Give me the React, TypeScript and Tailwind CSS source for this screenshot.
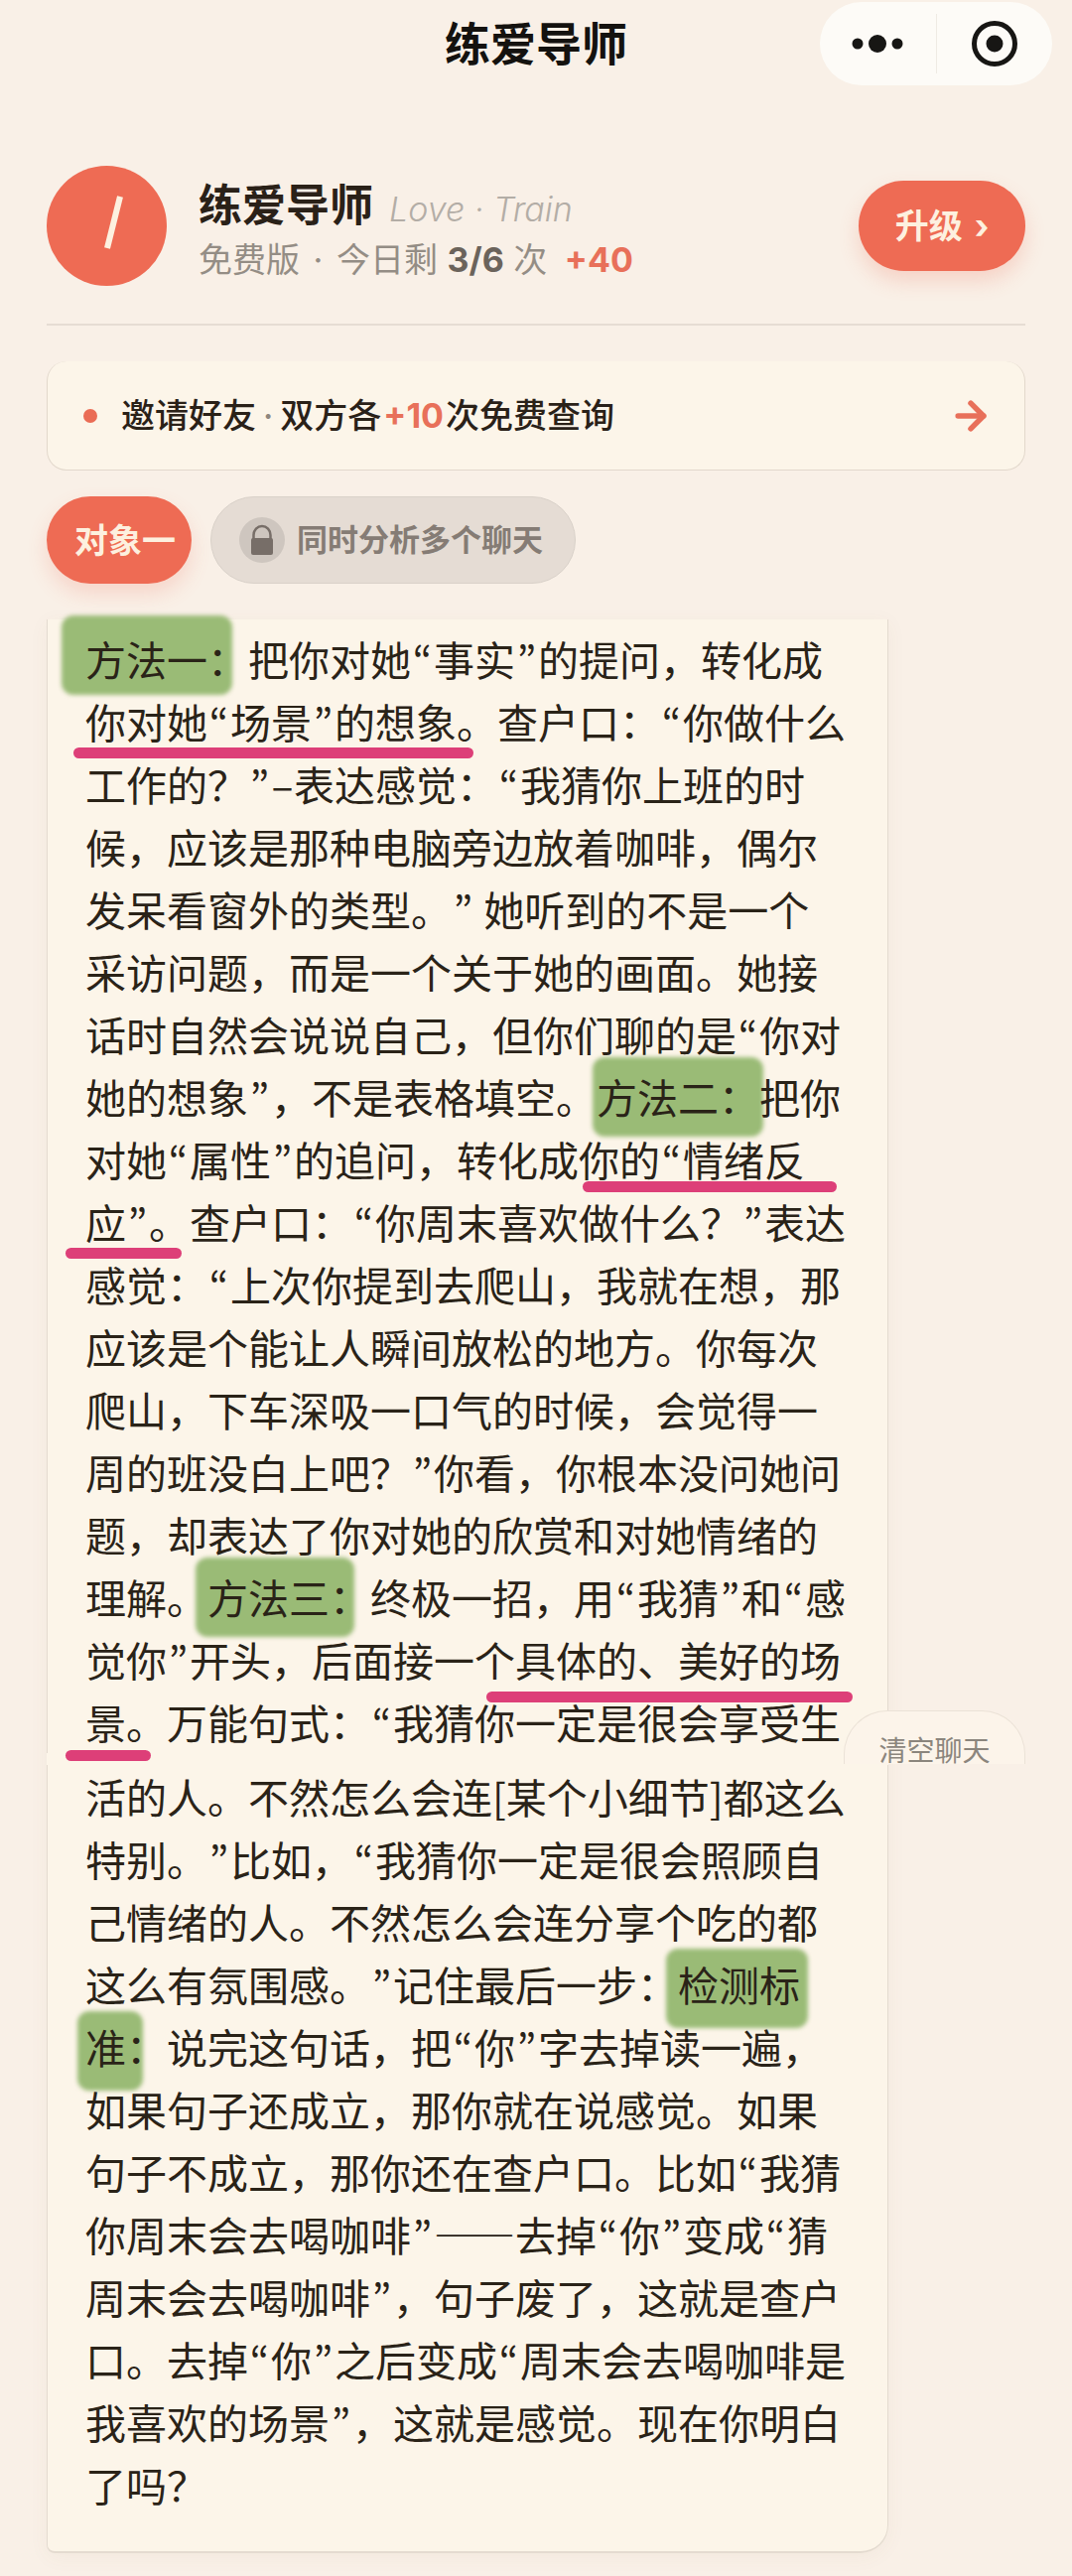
import React from 'react';
import { ArrowRight } from 'lucide-react';

interface Segment {
  text: string;
  // class names of the highlighter patch / pen stroke drawn on this piece of text
  highlight?: string;
  underline?: string;
}

type Line = Segment[];

const firstPart: Line[] = [
  [{ text: '方法一：', highlight: '-top-3 -left-6 right-4' }, { text: '把你对她“事实”的提问，转化成' }],
  [{ text: '你对她“场景”的想象。', underline: 'top-[58px] -left-3 right-6' }, { text: '查户口：“你做什么' }],
  [{ text: '工作的？”–表达感觉：“我猜你上班的时' }],
  [{ text: '候，应该是那种电脑旁边放着咖啡，偶尔' }],
  [{ text: '发呆看窗外的类型。” 她听到的不是一个' }],
  [{ text: '采访问题，而是一个关于她的画面。她接' }],
  [{ text: '话时自然会说说自己，但你们聊的是“你对' }],
  [{ text: '她的想象”，不是表格填空。' }, { text: '方法二：', highlight: '-top-2 -left-1 -right-1' }, { text: '把你' }],
  [{ text: '对她“属性”的追问，转化成' }, { text: '你的“情绪反', underline: 'top-[54px] left-1 -right-8' }],
  [{ text: '应”。', underline: 'top-[58px] -left-5 right-2' }, { text: '查户口：“你周末喜欢做什么？”表达' }],
  [{ text: '感觉：“上次你提到去爬山，我就在想，那' }],
  [{ text: '应该是个能让人瞬间放松的地方。你每次' }],
  [{ text: '爬山，下车深吸一口气的时候，会觉得一' }],
  [{ text: '周的班没白上吧？”你看，你根本没问她问' }],
  [{ text: '题，却表达了你对她的欣赏和对她情绪的' }],
  [{ text: '理解。' }, { text: '方法三：', highlight: '-top-2 -left-3 right-4' }, { text: '终极一招，用“我猜”和“感' }],
  [{ text: '觉你”开头，后面接一' }, { text: '个具体的、美好的场', underline: 'top-16 left-3 -right-3' }],
  [{ text: '景。', underline: 'top-[60px] -left-5 right-4' }, { text: '万能句式：“我猜你一定是很会享受生' }],
];

const secondPart: Line[] = [
  [{ text: '活的人。不然怎么会连[某个小细节]都这么' }],
  [{ text: '特别。”比如，“我猜你一定是很会照顾自' }],
  [{ text: '己情绪的人。不然怎么会连分享个吃的都' }],
  [{ text: '这么有氛围感。”记住最后一步：' }, { text: '检测标', highlight: '-top-1 -left-3 -right-2' }],
  [{ text: '准：', highlight: '-top-1 -left-2 right-6' }, { text: '说完这句话，把“你”字去掉读一遍，' }],
  [{ text: '如果句子还成立，那你就在说感觉。如果' }],
  [{ text: '句子不成立，那你还在查户口。比如“我猜' }],
  [{ text: '你周末会去喝咖啡”——去掉“你”变成“猜' }],
  [{ text: '周末会去喝咖啡”，句子废了，这就是查户' }],
  [{ text: '口。去掉“你”之后变成“周末会去喝咖啡是' }],
  [{ text: '我喜欢的场景”，这就是感觉。现在你明白' }],
  [{ text: '了吗？' }],
];

// Curly quotes and the short dash take a half-width cell instead of a full CJK one
const Typeset: React.FC<{ text: string }> = ({ text }) => (
  <>
    {text.split(/([“”–])/).map((part, i) =>
      /^[“”–]$/.test(part) ? (
        <span key={i} className="inline-block w-[23px] text-center leading-none font-['Noto_Sans_CJK_KR','Noto_Sans_CJK_SC',sans-serif]" lang="ko">
          {part}
        </span>
      ) : (
        <React.Fragment key={i}>{part}</React.Fragment>
      )
    )}
  </>
);

const Paragraph: React.FC<{ lines: Line[] }> = ({ lines }) => (
  <p className="text-[41px] leading-[63px] whitespace-nowrap text-[#2a2318]">
    {lines.map((line, i) => (
      <span key={i} className="block h-[63px]">
        {line.map((seg, j) =>
          seg.highlight || seg.underline ? (
            <span key={j} className="relative inline-block">
              {seg.highlight && (
                <span className={`absolute -z-10 h-20 rounded-xl bg-[#9abb76] blur-[2px] ${seg.highlight}`} />
              )}
              <Typeset text={seg.text} />
              {seg.underline && (
                <span className={`absolute h-[11px] rounded-full bg-[#dd3f78] ${seg.underline}`} />
              )}
            </span>
          ) : (
            <Typeset key={j} text={seg.text} />
          )
        )}
      </span>
    ))}
  </p>
);

const TopBar: React.FC = () => (
  <header className="grid h-[88px] grid-cols-[1fr_auto_1fr] items-center">
    <h1 className="col-start-2 text-[46px] leading-[64px] font-bold text-[#14120f]">练爱导师</h1>
    <div className="mr-5 flex h-[84px] w-[234px] items-center justify-self-end rounded-full bg-[#fdfbf7]">
      <button type="button" aria-label="更多" className="flex flex-1 justify-center">
        <svg width="56" height="24" viewBox="0 0 56 24" fill="#171614">
          <circle cx="8" cy="12" r="5.5" />
          <circle cx="28" cy="12" r="9" />
          <circle cx="48" cy="12" r="5.5" />
        </svg>
      </button>
      <span className="h-[60px] w-px bg-[#efebe4]" />
      <button type="button" aria-label="关闭" className="flex flex-1 justify-center">
        <svg width="48" height="48" viewBox="0 0 48 48">
          <circle cx="24" cy="24" r="20.5" fill="none" stroke="#171614" strokeWidth="5" />
          <circle cx="24" cy="24" r="8.5" fill="#171614" />
        </svg>
      </button>
    </div>
  </header>
);

const Profile: React.FC = () => (
  <section className="flex items-center border-b-2 border-[#e6dcd3] pb-[38px]">
    <svg className="shrink-0" width="121" height="121" viewBox="0 0 121 121">
      <circle cx="60.5" cy="60.5" r="60.5" fill="#ee6b54" />
      <path d="M74 31 L61 83" stroke="#fdf1e0" strokeWidth="6" />
    </svg>
    <div className="ml-8 flex-1 pt-2">
      <div className="flex items-baseline gap-4">
        <h2 className="text-[44px] leading-[56px] font-bold text-[#2a2118]">练爱导师</h2>
        <span className="text-[34px] leading-[56px] font-light text-[#b3ada6] italic">Love · Train</span>
      </div>
      <p className="text-[34px] leading-[46px] text-[#948d85]">
        免费版<span className="mx-1"> · </span>今日剩 <b className="font-bold text-[#6b635b]">3/6</b> 次{' '}
        <b className="ml-2 font-bold text-[#e8705a]">+40</b>
      </p>
    </div>
    <button
      type="button"
      className="flex h-[91px] w-[168px] items-center justify-center gap-3 rounded-full bg-[#ee6b54] text-[34px] font-bold text-[#fdf0df] shadow-[0_10px_20px_rgba(238,107,84,0.22)]"
    >
      升级 <span>›</span>
    </button>
  </section>
);

const InviteBanner: React.FC = () => (
  <a
    href="#invite"
    className="mt-9 flex h-[110px] items-center rounded-[20px] border border-t-0 border-[#e2d8cc] bg-[#fcf5e9] pr-8 pl-9 text-[34px] font-medium text-[#2a2118]"
  >
    <span className="mr-6 size-[14px] rounded-full bg-[#ea6c55]" />
    <span className="flex-1">
      邀请好友<span className="mx-[7px] text-[#8f877e]">·</span>双方各
      <b className="mx-[2px] font-bold text-[#e8705a]">+10</b>次免费查询
    </span>
    <ArrowRight className="text-[#e8705a]" size={44} strokeWidth={3} />
  </a>
);

const ChatTabs: React.FC = () => (
  <nav className="mt-[26px] flex gap-[19px]">
    <button
      type="button"
      className="h-[88px] rounded-full bg-[#ee6b54] pr-4 pl-7 text-[34px] font-bold text-[#fdf0df] shadow-[0_10px_20px_rgba(238,107,84,0.2)]"
    >
      对象一
    </button>
    <button
      type="button"
      className="flex h-[88px] items-center gap-3 rounded-full border border-[#d9d1c9] bg-[#e5dcd4] pr-8 pl-7 text-[31px] font-bold text-[#857c75]"
    >
      <svg width="46" height="46" viewBox="0 0 46 46">
        <circle cx="23" cy="23" r="23" fill="#cec6bf" />
        <path d="M14.5 22 V18 a8.5 9 0 0 1 17 0 V22" fill="none" stroke="#776e68" strokeWidth="2.5" />
        <rect x="12" y="21" width="22" height="17" rx="2" fill="#776e68" />
      </svg>
      同时分析多个聊天
    </button>
  </nav>
);

export default function App() {
  return (
    <div className="min-h-screen bg-[#f9f0e7] pb-6 font-['Inter','Noto_Sans_CJK_SC',sans-serif] [text-spacing-trim:space-all]" lang="zh-CN">
      <TopBar />
      <main className="px-[47px] pt-[79px]">
        <Profile />
        <InviteBanner />
        <ChatTabs />

        <div className="relative mt-9 font-['Noto_Sans_CJK_SC',sans-serif]">
          <article className="isolate w-[86%] rounded-br-[28px] rounded-bl-lg bg-[#fcf5e9] shadow-[0_4px_20px_rgba(120,90,60,0.05)]">
            <div className="border-x border-[#e4dbd0] pt-2 pl-[38px]">
              <Paragraph lines={firstPart} />
            </div>
            <div className="mt-3 rounded-br-[28px] rounded-bl-lg border-x border-b-2 border-[#e4dbd0] pb-9 pl-[38px]">
              <Paragraph lines={secondPart} />
            </div>
          </article>
          <button
            type="button"
            className="absolute top-[1099px] right-0 h-[54px] w-[183px] rounded-t-[44px] border border-b-0 border-[#ebe2d7] bg-[#fcf4ea] pt-[18px] text-[28px] leading-[40px] text-[#8b857d]"
          >
            清空聊天
          </button>
        </div>
      </main>
    </div>
  );
}
